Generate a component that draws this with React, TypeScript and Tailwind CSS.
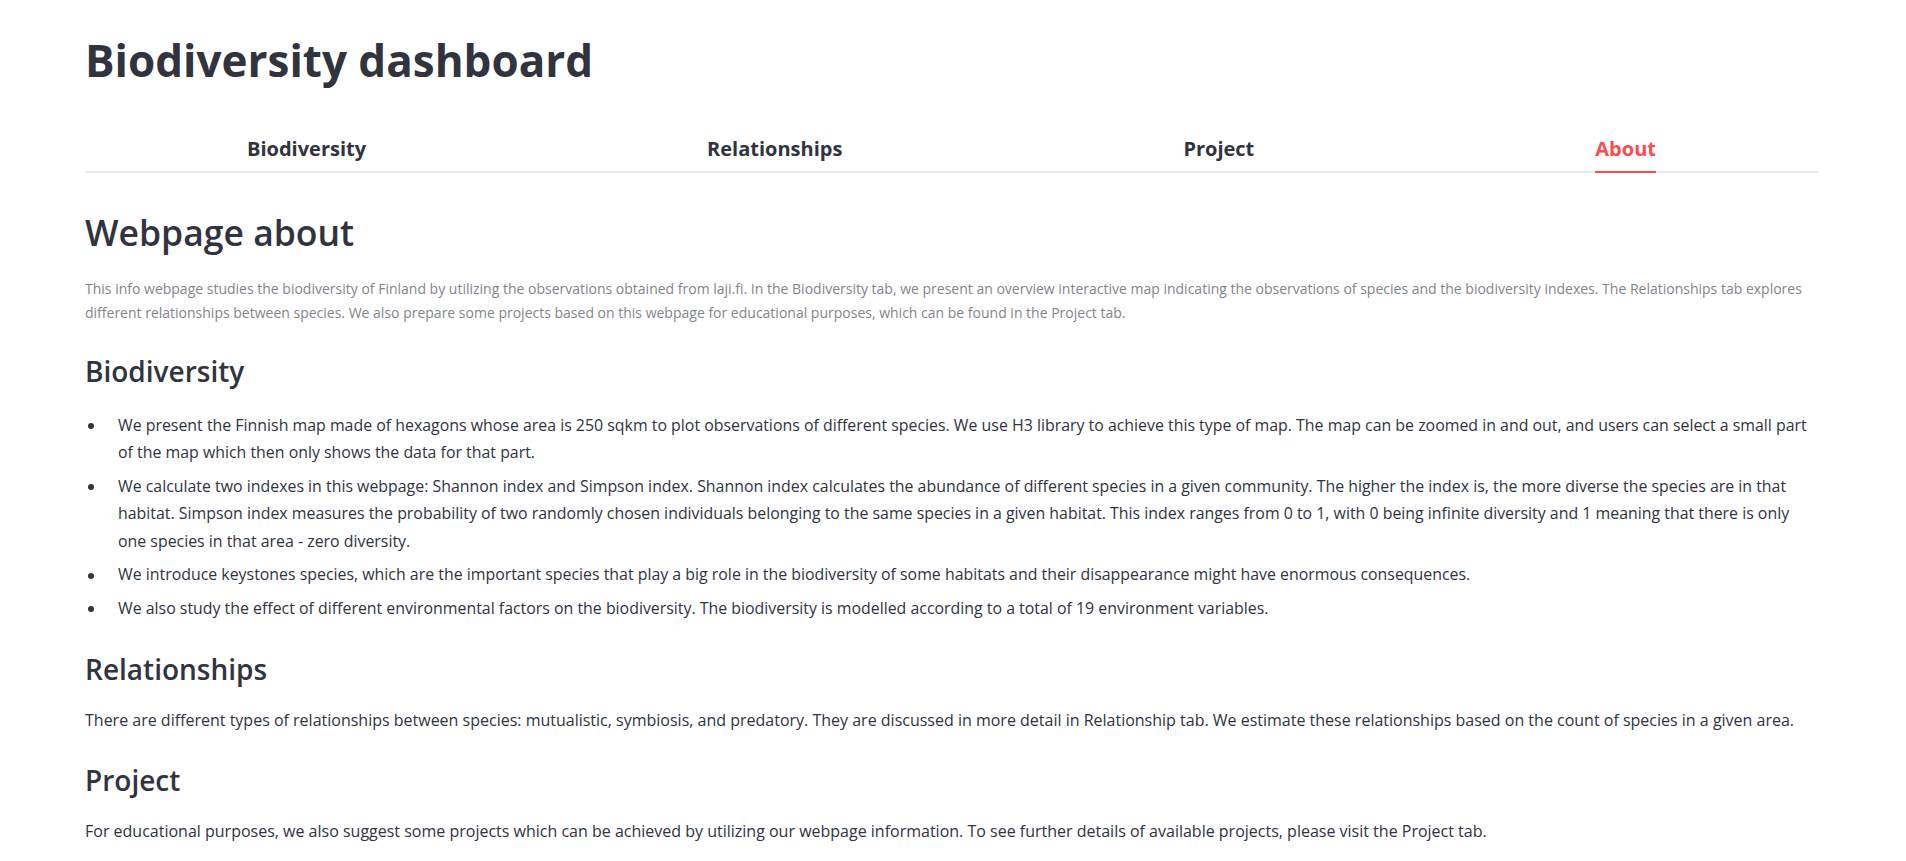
const tabs = ['Biodiversity', 'Relationships', 'Project', 'About'];

const bullets = [
  'We present the Finnish map made of hexagons whose area is 250 sqkm to plot observations of different species. We use H3 library to achieve this type of map. The map can be zoomed in and out, and users can select a small part of the map which then only shows the data for that part.',
  'We calculate two indexes in this webpage: Shannon index and Simpson index. Shannon index calculates the abundance of different species in a given community. The higher the index is, the more diverse the species are in that habitat. Simpson index measures the probability of two randomly chosen individuals belonging to the same species in a given habitat. This index ranges from 0 to 1, with 0 being infinite diversity and 1 meaning that there is only one species in that area - zero diversity.',
  'We introduce keystones species, which are the important species that play a big role in the biodiversity of some habitats and their disappearance might have enormous consequences.',
  'We also study the effect of different environmental factors on the biodiversity. The biodiversity is modelled according to a total of 19 environment variables.',
];

function App() {
  const active = 'About';

  return (
    <div className="min-h-screen bg-white font-['Open_Sans',sans-serif] text-[#31333f]">
      <main className="pl-[85px] pr-[88px] pt-[34px] pb-10">
        <h1 className="text-[44px] leading-[52px] font-bold">Biodiversity dashboard</h1>

        <nav className="mt-[51px] flex justify-between px-[162px] border-b-2 border-[#ebebec]">
          {tabs.map((tab) => (
            <button
              key={tab}
              type="button"
              className={
                tab === active
                  ? '-mb-[2px] border-b-2 border-[#ff4b4b] pb-[10px] text-[20px] leading-[24px] font-bold text-[#ff4b4b]'
                  : '-mb-[2px] border-b-2 border-transparent pb-[10px] text-[20px] leading-[24px] font-bold'
              }
            >
              {tab}
            </button>
          ))}
        </nav>

        <h2 className="mt-[37px] text-[35.5px] leading-[44px] font-semibold">Webpage about</h2>
        <p className="mt-[23px] text-[14px] leading-[24.3px] text-[#83858c]">
          This info webpage studies the biodiversity of Finland by utilizing the observations obtained from laji.fi. In the Biodiversity tab, we present an overview interactive map indicating the observations of species and the biodiversity indexes. The Relationships tab explores different relationships between species. We also prepare some projects based on this webpage for educational purposes, which can be found in the Project tab.
        </p>

        <h3 className="mt-[27px] text-[28px] leading-[36px] font-semibold">Biodiversity</h3>
        <ul className="mt-[23px] flex flex-col gap-[6px] text-[15.9px] leading-[27.5px]">
          {bullets.map((b) => (
            <li key={b} className="flex">
              <div className="w-[33px] shrink-0 h-[27.5px] flex items-center pt-[2px] pl-[3px]">
                <span className="w-[6px] h-[6px] rounded-full bg-[#31333f]" />
              </div>
              <span>{b}</span>
            </li>
          ))}
        </ul>

        <h3 className="mt-[29px] text-[28px] leading-[36px] font-semibold">Relationships</h3>
        <p className="mt-[20px] text-[16px] leading-[27px]">
          There are different types of relationships between species: mutualistic, symbiosis, and predatory. They are discussed in more detail in Relationship tab. We estimate these relationships based on the count of species in a given area.
        </p>

        <h3 className="mt-[28px] text-[28px] leading-[36px] font-semibold">Project</h3>
        <p className="mt-[20px] text-[16px] leading-[27px]">
          For educational purposes, we also suggest some projects which can be achieved by utilizing our webpage information. To see further details of available projects, please visit the Project tab.
        </p>
      </main>
    </div>
  );
}

export default App;
